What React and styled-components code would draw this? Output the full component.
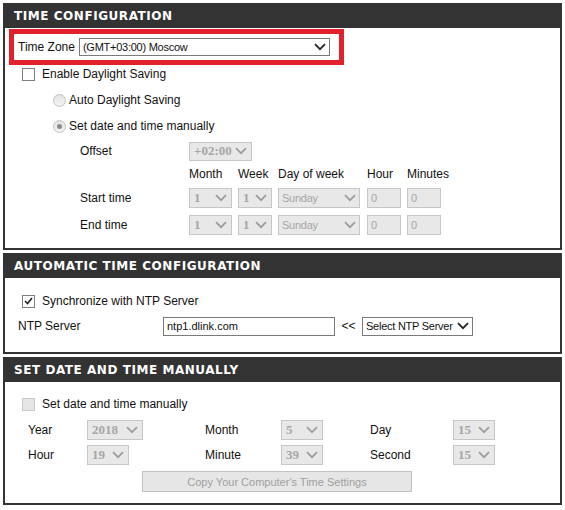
import React from 'react'
import styled, {createGlobalStyle, css} from 'styled-components'

const GlobalStyle = createGlobalStyle`
	body {
		margin: 0;
		background: #fff;
		font-family: "Liberation Sans", Arial, sans-serif;
		font-size: 12px;
		color: #111;
	}
`

const Page = styled.div`
	display: flex;
	flex-direction: column;
	gap: 3px;
	width: 559px;
	padding: 3px 0 0 3px;
`

const Panel = styled.section`
	border: 2px solid #333;
	border-top: 0;
	background: #fff;
`

const Title = styled.h2`
	margin: 0;
	height: 25px;
	padding-left: 9px;
	background: #333;
	color: #fff;
	font-family: "DejaVu Sans", Verdana, sans-serif;
	font-weight: 700;
	font-size: 12px;
	letter-spacing: 0.55px;
	line-height: 26px;
`

const Body = styled.div`
	display: flex;
	flex-direction: column;
	padding: ${p => p.$pad};
`

const Highlight = styled.div`
	display: flex;
	align-items: center;
	gap: 4px;
	width: 335px;
	height: 36px;
	box-sizing: border-box;
	margin: 1px 0 0 4px;
	padding-left: 4px;
	border: 5px solid #e2212b;
`

const Row = styled.div`
	display: flex;
	align-items: center;
	height: ${p => p.$h}px;
	padding-left: ${p => p.$indent || 0}px;
	margin-top: ${p => p.$top || 0}px;
`

const Label = styled.span`
	display: inline-block;
	width: ${p => (p.$w ? `${p.$w}px` : 'auto')};
	flex-shrink: 0;
	white-space: nowrap;
`

const Box = styled.span`
	box-sizing: border-box;
	display: inline-flex;
	align-items: center;
	justify-content: center;
	width: 13px;
	height: 13px;
	margin-right: 7px;
	border: 1px solid ${p => (p.$disabled ? '#c9c9c9' : '#7f7f7f')};
	background: ${p => (p.$disabled ? '#e6e6e6' : '#fff')};
`

const Radio = styled.span`
	box-sizing: border-box;
	display: inline-flex;
	align-items: center;
	justify-content: center;
	width: 13px;
	height: 13px;
	margin-right: 3px;
	border-radius: 50%;
	border: 1px solid #c2c2c2;
	background: linear-gradient(#e4e4e4, #f4f4f4);
	&::after {
		content: '';
		display: ${p => (p.$checked ? 'block' : 'none')};
		width: 5px;
		height: 5px;
		border-radius: 50%;
		background: #8a8a8a;
	}
`

const Check = ({checked, disabled}) => (
	<Box $disabled={disabled}>
		{checked && (
			<svg width="9" height="8" viewBox="0 0 9 8">
				<path d="M1 4 L3.5 6.5 L8 1" fill="none" stroke="#222" strokeWidth="1.6" />
			</svg>
		)}
	</Box>
)

const SelectBox = styled.div`
	box-sizing: border-box;
	display: inline-flex;
	align-items: center;
	justify-content: space-between;
	gap: 3px;
	width: ${p => p.$w}px;
	height: ${p => p.$h || 20}px;
	padding: 0 3px 0 3px;
	font-size: 11px;
	letter-spacing: -0.25px;
	white-space: nowrap;
	& svg {
		flex-shrink: 0;
	}
	${p =>
		p.$disabled
			? css`
					border: 1px solid #c6c6c6;
					background: #e8e8e8;
					color: #a6a6a6;
			  `
			: css`
					border: 1px solid #7a7a7a;
					background: #fff;
					color: #111;
			  `}
	${p =>
		p.$serif &&
		css`
			font-family: "Liberation Serif", "Times New Roman", serif;
			font-size: 13px;
			font-weight: 700;
			letter-spacing: 0;
			padding: 0 4px;
		`}
`

const Chevron = ({color}) => (
	<svg width="12" height="8" viewBox="0 0 12 8">
		<path d="M1 1.2 L6 6.2 L11 1.2" fill="none" stroke={color} strokeWidth="1.7" />
	</svg>
)

const Select = ({value, w, h, disabled, serif}) => (
	<SelectBox $w={w} $h={h} $disabled={disabled} $serif={serif}>
		<span>{value}</span>
		<Chevron color={disabled ? '#9c9c9c' : '#222'} />
	</SelectBox>
)

const TextBox = styled.div`
	box-sizing: border-box;
	display: inline-flex;
	align-items: center;
	width: ${p => p.$w}px;
	height: ${p => p.$h || 20}px;
	padding-left: 3px;
	font-size: 11px;
	border: 1px solid ${p => (p.$disabled ? '#c6c6c6' : '#7a7a7a')};
	background: ${p => (p.$disabled ? '#e8e8e8' : '#fff')};
	color: ${p => (p.$disabled ? '#a6a6a6' : '#111')};
`

const DstGrid = styled.div`
	display: grid;
	grid-template-columns: 109px 49px 40px 89px 40px auto;
	grid-template-rows: 24px 22px 26px 27px;
	align-items: center;
	padding-left: 75px;
`

const OffsetCell = styled.div`
	grid-column: 2 / -1;
`

const ColumnHead = styled(Label)`
	${p => p.$first && 'grid-column-start: 2;'}
`

const Gap = styled.span`
	display: inline-block;
	width: ${p => p.$w}px;
	text-align: center;
`

const DateGrid = styled.div`
	display: grid;
	grid-template-columns: 59px 118px 76px 89px 83px auto;
	grid-template-rows: 25px 26px;
	align-items: center;
	padding-left: 23px;
`

const CopyButton = styled.button`
	box-sizing: border-box;
	width: 270px;
	height: 21px;
	margin: 3px 0 0 137px;
	padding: 0;
	border: 1px solid #c2c2c2;
	background: #e6e6e6;
	color: #a0a0a0;
	font-family: "Liberation Sans", Arial, sans-serif;
	font-size: 11px;
`

const heads = ['Month', 'Week', 'Day of week', 'Hour', 'Minutes']

const DstRow = ({label}) => (
	<>
		<Label>{label}</Label>
		<Select value="1" w={43} disabled serif />
		<Select value="1" w={34} disabled serif />
		<Select value="Sunday" w={82} disabled />
		<TextBox $w={34} $disabled>0</TextBox>
		<TextBox $w={34} $disabled>0</TextBox>
	</>
)

const App = () => (
	<>
		<GlobalStyle />
		<Page>
			<Panel>
				<Title>TIME CONFIGURATION</Title>
				<Body $pad="0 0 10px 0">
					<Highlight>
						<Label>Time Zone</Label>
						<Select value="(GMT+03:00) Moscow" w={251} h={18} />
					</Highlight>
					<Row $h={18} $indent={17}>
						<Check />
						Enable Daylight Saving
					</Row>
					<Row $h={26} $top={4} $indent={48}>
						<Radio />
						Auto Daylight Saving
					</Row>
					<Row $h={26} $indent={48}>
						<Radio $checked />
						Set date and time manually
					</Row>
					<DstGrid>
						<Label>Offset</Label>
						<OffsetCell>
							<Select value="+02:00" w={63} h={19} disabled serif />
						</OffsetCell>
						{heads.map((h, i) => (
							<ColumnHead key={h} $first={i === 0}>
								{h}
							</ColumnHead>
						))}
						<DstRow label="Start time" />
						<DstRow label="End time" />
					</DstGrid>
				</Body>
			</Panel>

			<Panel>
				<Title>AUTOMATIC TIME CONFIGURATION</Title>
				<Body $pad="10px 0 14px 0">
					<Row $h={26} $indent={17}>
						<Check checked />
						Synchronize with NTP Server
					</Row>
					<Row $h={24} $indent={13}>
						<Label $w={145}>NTP Server</Label>
						<TextBox $w={172} $h={19}>ntp1.dlink.com</TextBox>
						<Gap $w={27}>&lt;&lt;</Gap>
						<Select value="Select NTP Server" w={111} h={19} />
					</Row>
				</Body>
			</Panel>

			<Panel>
				<Title>SET DATE AND TIME MANUALLY</Title>
				<Body $pad="9px 0 11px 0">
					<Row $h={26} $indent={17}>
						<Check disabled />
						Set date and time manually
					</Row>
					<DateGrid>
						<Label>Year</Label>
						<Select value="2018" w={56} disabled serif />
						<Label>Month</Label>
						<Select value="5" w={42} disabled serif />
						<Label>Day</Label>
						<Select value="15" w={42} disabled serif />
						<Label>Hour</Label>
						<Select value="19" w={42} disabled serif />
						<Label>Minute</Label>
						<Select value="39" w={42} disabled serif />
						<Label>Second</Label>
						<Select value="15" w={42} disabled serif />
					</DateGrid>
					<div>
						<CopyButton disabled>Copy Your Computer's Time Settings</CopyButton>
					</div>
				</Body>
			</Panel>
		</Page>
	</>
)

export default App
